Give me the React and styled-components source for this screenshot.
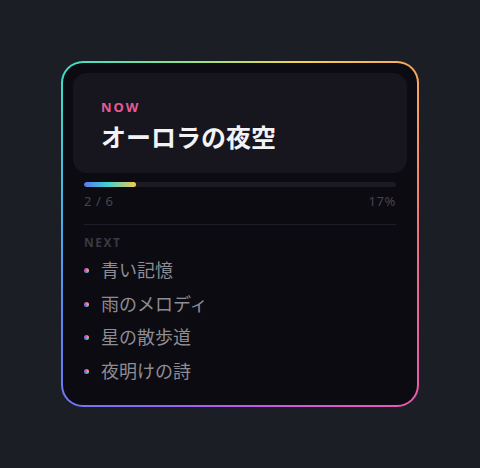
import React from "react";
import styled, { createGlobalStyle } from "styled-components";

const Global = createGlobalStyle`
  html, body { margin: 0; padding: 0; background: #1b1e24; }
  body { font-family: "Noto Sans", "Noto Sans CJK JP", sans-serif; }
`;

const Page = styled.div`
  min-height: 100vh;
  display: flex;
  align-items: center;
  justify-content: center;
`;

const Frame = styled.div`
  width: 358px;
  box-sizing: border-box;
  padding: 2px;
  border-radius: 22px;
  background: conic-gradient(
    from -45deg,
    #3fe0c4 0%,
    #9fe07c 9%,
    #f3d24c 18%,
    #f7a65c 26%,
    #f26f7c 38%,
    #e85ab0 50%,
    #c65ae6 60%,
    #8a68f2 70%,
    #5a86f4 80%,
    #46b4e6 90%,
    #3fe0c4 100%
  );
`;

const Inner = styled.div`
  background: #0c0b12;
  border-radius: 20px;
  padding: 10px 10px 20px;
`;

const NowPanel = styled.div`
  background: #17161e;
  border-radius: 14px;
  padding: 27px 28px 20px;
`;

const Label = styled.div`
  font-size: ${(p) => (p.$small ? 12 : 13)}px;
  line-height: 14px;
  font-weight: 700;
  letter-spacing: ${(p) => (p.$small ? 1.5 : 2)}px;
  color: ${(p) => p.$color};
`;

const Title = styled.div`
  margin-top: 7px;
  font-size: 25px;
  line-height: 32px;
  font-weight: 700;
  color: #f3f3f6;
`;

const Body = styled.div`
  padding: 9px 11px 0;
`;

const Track = styled.div`
  height: 5px;
  border-radius: 3px;
  background: #1c1b24;
  overflow: hidden;
`;

const Fill = styled.div`
  height: 100%;
  border-radius: 3px;
  background: linear-gradient(90deg, #5b78f0 0%, #3fd2d0 45%, #f5c94e 100%);
`;

const Meta = styled.div`
  margin-top: 6px;
  display: flex;
  justify-content: space-between;
  font-size: 13px;
  line-height: 17px;
  color: #46454f;
  letter-spacing: 0.6px;
`;

const Divider = styled.div`
  margin-top: 14px;
  height: 1px;
  background: #1f1e28;
`;

const NextSection = styled.div`
  margin-top: 11px;
`;

const List = styled.ul`
  list-style: none;
  margin: 7px 0 0;
  padding: 0;
  display: flex;
  flex-direction: column;
  gap: 6.5px;
`;

const Item = styled.li`
  display: flex;
  align-items: center;
  gap: 12px;
  font-size: 18px;
  line-height: 27px;
  color: #8e8d94;
`;

const Dot = styled.span`
  width: 5px;
  height: 5px;
  border-radius: 50%;
  flex: none;
  background: conic-gradient(#e85ab0, #f3b04c, #3fd2c4, #5a7cf0, #b05ae6, #e85ab0);
`;

const next = ["青い記憶", "雨のメロディ", "星の散歩道", "夜明けの詩"];

export default function App() {
  const current = 2;
  const total = 6;
  const fill = 100 / total;
  return (
    <Page>
      <Global />
      <Frame>
        <Inner>
          <NowPanel>
            <Label $color="#e65a98">NOW</Label>
            <Title>オーロラの夜空</Title>
          </NowPanel>
          <Body>
            <Track>
              <Fill style={{ width: `${fill}%` }} />
            </Track>
            <Meta>
              <span>{current} / {total}</span>
              <span>17%</span>
            </Meta>
            <Divider />
            <NextSection>
              <Label $small $color="#3a3944">NEXT</Label>
              <List>
                {next.map((t) => (
                  <Item key={t}>
                    <Dot />
                    {t}
                  </Item>
                ))}
              </List>
            </NextSection>
          </Body>
        </Inner>
      </Frame>
    </Page>
  );
}
